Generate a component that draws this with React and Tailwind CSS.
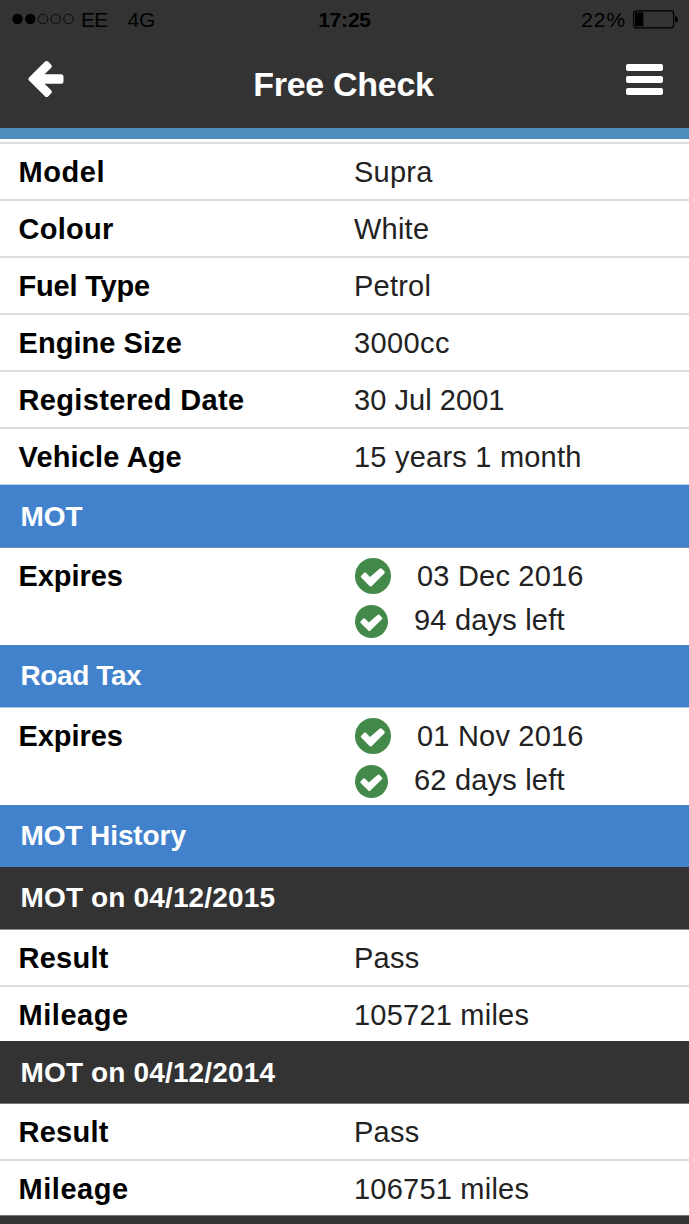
import React from 'react';

const detalhes = [
  { label: 'Model', value: 'Supra', labelClass: 'tracking-[0.55px]' },
  { label: 'Colour', value: 'White', labelClass: 'tracking-[0.25px]' },
  { label: 'Fuel Type', value: 'Petrol', labelClass: 'tracking-[-0.2px]' },
  { label: 'Engine Size', value: '3000cc', labelClass: 'tracking-[0.05px]', valueClass: 'tracking-[0.4px]' },
  { label: 'Registered Date', value: '30 Jul 2001', labelClass: 'tracking-[0.35px]', valueClass: 'tracking-[0.05px]' },
  { label: 'Vehicle Age', value: '15 years 1 month', labelClass: 'tracking-[0.15px]' },
];

// ==========================================
// ICONS
// ==========================================
const BackArrow = () => (
  <svg width="36" height="38" viewBox="0 0 36 38">
    <path
      d="M3 19 L18.6 3.6 L21.2 6.2 L10.5 16.8 H33 V21.2 H10.5 L21.2 31.8 L18.6 34.4 Z"
      fill="#fff"
      stroke="#fff"
      strokeWidth="5"
      strokeLinejoin="round"
    />
  </svg>
);

const CheckCircle = ({ className }) => (
  <svg className={className} viewBox="0 0 36 36">
    <circle cx="18" cy="18" r="18" fill="#43894a" />
    <path
      d="M6.2 17.7 L9.2 14.7 Q10 14 10.8 14.7 L15.1 19 L24.9 10.6 Q25.8 9.9 26.6 10.6 L29.5 13.6 Q30.3 14.5 29.5 15.3 L16.6 28.2 Q15.7 29 14.8 28.2 L6.2 19.6 Q5.3 18.6 6.2 17.7 Z"
      fill="#fff"
    />
  </svg>
);

const Battery = () => (
  <svg width="46" height="19" viewBox="0 0 46 19">
    <rect x="0.6" y="0.8" width="40" height="17" rx="2.5" fill="none" stroke="#000" strokeWidth="1.2" />
    <rect x="2" y="2.3" width="8.3" height="14" fill="#000" />
    <path d="M42 6 Q45 6.5 45 9.3 Q45 12 42 12.6 Z" fill="#000" />
  </svg>
);

const SignalDots = () => (
  <svg width="63" height="12" viewBox="0 0 63 12">
    <circle cx="5.5" cy="6" r="5.2" />
    <circle cx="18.3" cy="6" r="5.2" />
    <circle cx="31" cy="6" r="4.8" fill="none" stroke="#000" strokeWidth="0.8" />
    <circle cx="43.7" cy="6" r="4.8" fill="none" stroke="#000" strokeWidth="0.8" />
    <circle cx="56.5" cy="6" r="4.8" fill="none" stroke="#000" strokeWidth="0.8" />
  </svg>
);

// ==========================================
// HEADER
// ==========================================
const StatusBar = () => (
  <div className="grid h-[38px] grid-cols-[1fr_60px_1fr] items-center pr-[10px] pl-3 text-[21px] leading-none text-black">
    <div className="flex items-center">
      <SignalDots />
      <span className="ml-[6px] tracking-[-0.8px]">EE</span>
      <span className="ml-[20px]">4G</span>
    </div>
    <div className="-ml-[2px] text-center font-bold tracking-[-0.2px]">17:25</div>
    <div className="flex items-center justify-end gap-[7px]">
      <span className="tracking-[0.9px]">22%</span>
      <Battery />
    </div>
  </div>
);

const Header = () => (
  <header className="h-[139px] border-b-[11px] border-[#4c8db9] bg-[#333333]">
    <StatusBar />
    <div className="flex h-[84px] items-start justify-between pr-[26px] pl-7">
      <button type="button" className="mt-[22px] w-[36px]">
        <BackArrow />
      </button>
      <h1 className="mt-[27px] -ml-[3px] text-[34px] leading-[38px] font-bold tracking-[-0.3px] text-white">Free Check</h1>
      <button type="button" className="mt-[26px] flex w-[37px] flex-col gap-[5px]">
        <span className="h-[7px] rounded-[2px] bg-white" />
        <span className="h-[7px] rounded-[2px] bg-white" />
        <span className="h-[7px] rounded-[2px] bg-white" />
      </button>
    </div>
  </header>
);

// ==========================================
// ROWS
// ==========================================
const Row = ({ label, value, className, labelClass, valueClass = 'tracking-[0.22px]' }) => (
  <div className={`flex items-center text-[29px] leading-8 ${className}`}>
    <div className={`w-[354px] pl-[18.5px] font-bold text-black ${labelClass}`}>{label}</div>
    <div className={`text-[#222222] ${valueClass}`}>{value}</div>
  </div>
);

const Heading = ({ children, className }) => (
  <h2 className={`pl-[20.5px] text-[28px] leading-8 font-bold text-white ${className}`}>
    {children}
  </h2>
);

const ExpiryRow = ({ date, left }) => (
  <div className="flex h-[97px] text-[29px] leading-8">
    <div className="w-[355px] pt-3 pl-[18.5px] font-bold tracking-[-0.05px] text-black">Expires</div>
    <div className="text-[#222222]">
      <div className="flex h-[50px] pt-[10px]">
        <CheckCircle className="size-9" />
        <span className="mt-[2px] ml-[26px] tracking-[0.2px]">{date}</span>
      </div>
      <div className="flex h-[47px] pt-[7px]">
        <CheckCircle className="size-[33px]" />
        <span className="-mt-px ml-[26px] tracking-[0.2px]">{left}</span>
      </div>
    </div>
  </div>
);

const TestRows = ({ mileage }) => (
  <>
    <Row label="Result" value="Pass" className="h-[55px]" labelClass="tracking-[0.25px]" />
    <Row
      label="Mileage"
      value={mileage}
      className="h-[56px] border-t-2 border-[#dddddf] pt-[2px]"
      labelClass="tracking-[0.55px]"
    />
  </>
);

export default function App() {
  return (
    <div className="h-[1224px] w-[689px] overflow-hidden bg-white font-['Liberation_Sans',Arial,sans-serif]">
      <Header />
      <main className="pt-[3px]">
        {detalhes.map((item) => (
          <Row key={item.label} {...item} className="h-[57px] border-t-2 border-[#dddddf]" />
        ))}

        <div className="h-px bg-[#b9d3ea]" />
        <Heading className="h-[63px] border-b border-[#6f8fb8] bg-[#4282cd] pt-4">MOT</Heading>
        <ExpiryRow date="03 Dec 2016" left="94 days left" />

        <Heading className="h-[63px] border-b border-[#b4c8dc] bg-[#4282cd] pt-[15px] tracking-[-0.4px]">Road Tax</Heading>
        <ExpiryRow date="01 Nov 2016" left="62 days left" />

        <Heading className="h-[62px] bg-[#4282cd] pt-[15px] tracking-[-0.1px]">MOT History</Heading>
        <Heading className="h-[63px] border-b border-[#8b8b8b] bg-[#333333] pt-[15px] tracking-[0.15px]">
          MOT on 04/12/2015
        </Heading>
        <TestRows mileage="105721 miles" />

        <Heading className="h-[63px] border-b border-[#777777] bg-[#333333] pt-4 tracking-[0.15px]">
          MOT on 04/12/2014
        </Heading>
        <TestRows mileage="106751 miles" />
        <div className="h-3 border-t border-[#777777] bg-[#333333]" />
      </main>
    </div>
  );
}
